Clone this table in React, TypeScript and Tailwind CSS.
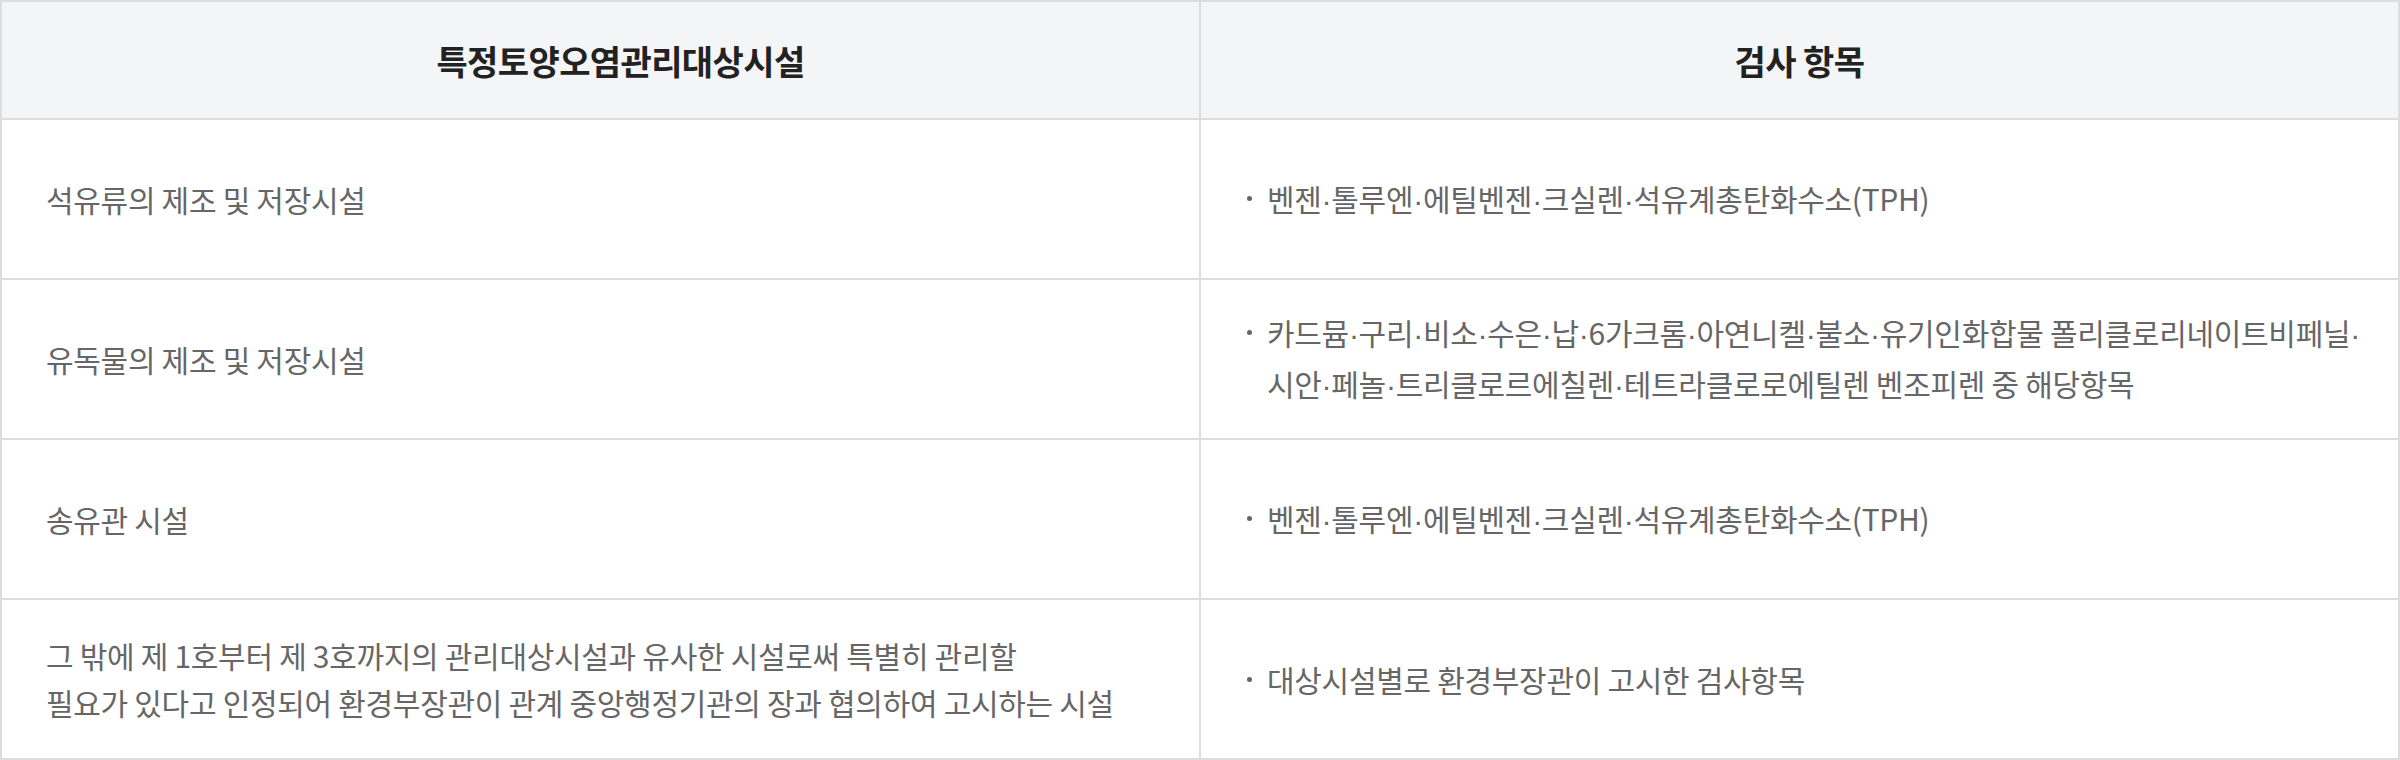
const rows: { facility: string[]; items: string[] }[] = [
  {
    facility: ["석유류의 제조 및 저장시설"],
    items: ["벤젠·톨루엔·에틸벤젠·크실렌·석유계총탄화수소(TPH)"],
  },
  {
    facility: ["유독물의 제조 및 저장시설"],
    items: [
      "카드뮴·구리·비소·수은·납·6가크롬·아연니켈·불소·유기인화합물 폴리클로리네이트비페닐·",
      "시안·페놀·트리클로르에칠렌·테트라클로로에틸렌 벤조피렌 중 해당항목",
    ],
  },
  {
    facility: ["송유관 시설"],
    items: ["벤젠·톨루엔·에틸벤젠·크실렌·석유계총탄화수소(TPH)"],
  },
  {
    facility: [
      "그 밖에 제 1호부터 제 3호까지의 관리대상시설과 유사한 시설로써 특별히 관리할",
      "필요가 있다고 인정되어 환경부장관이 관계 중앙행정기관의 장과 협의하여 고시하는 시설",
    ],
    items: ["대상시설별로 환경부장관이 고시한 검사항목"],
  },
];

// middle dots render full-width in the CJK font, so draw them with a latin font
function Dotted({ text }: { text: string }) {
  const parts = text.split("·");
  return (
    <>
      {parts.map((p, i) => (
        <span key={i}>
          {p}
          {i < parts.length - 1 && (
            <span className="font-['Liberation_Sans']">·</span>
          )}
        </span>
      ))}
    </>
  );
}

export default function App() {
  return (
    <div
      className="w-[2400px] h-[760px] bg-white"
      style={{ fontFamily: '"Noto Sans CJK KR", "Noto Sans", sans-serif' }}
    >
      <div className="grid grid-cols-2 border-l-2 border-t-2 border-[#dddddd]">
        <div className="h-[118px] flex items-center justify-center pl-[40px] bg-[#f4f5f7] border-r-2 border-b-2 border-[#dddddd] text-[34px] font-bold text-[#222222] tracking-[-0.6px]">
          특정토양오염관리대상시설
        </div>
        <div className="h-[118px] flex items-center justify-center bg-[#f4f5f7] border-r-2 border-b-2 border-[#dddddd] text-[34px] font-bold text-[#222222] tracking-[-0.6px]">
          검사 항목
        </div>
        {rows.map((row, i) => (
          <>
            <div
              key={`f${i}`}
              className="h-[160px] flex flex-col justify-center pl-[44px] border-r-2 border-b-2 border-[#dddddd] text-[30px] leading-[47px] text-[#666666] tracking-[-0.3px]"
            >
              {row.facility.map((l) => (
                <div key={l}>{l}</div>
              ))}
            </div>
            <div
              key={`t${i}`}
              className="h-[160px] flex items-center pl-[46px] border-r-2 border-b-2 border-[#dddddd] text-[30px] leading-[48px] text-[#666666] tracking-[-0.3px]"
            >
              <div className="flex">
                <span className="w-[20px] shrink-0 flex justify-start pt-[22px]">
                  <span className="w-[5px] h-[5px] rounded-full bg-[#666666]" />
                </span>
                <div className="flex flex-col">
                  {row.items.map((l) => (
                    <div key={l}>
                      <Dotted text={l} />
                    </div>
                  ))}
                </div>
              </div>
            </div>
          </>
        ))}
      </div>
    </div>
  );
}
